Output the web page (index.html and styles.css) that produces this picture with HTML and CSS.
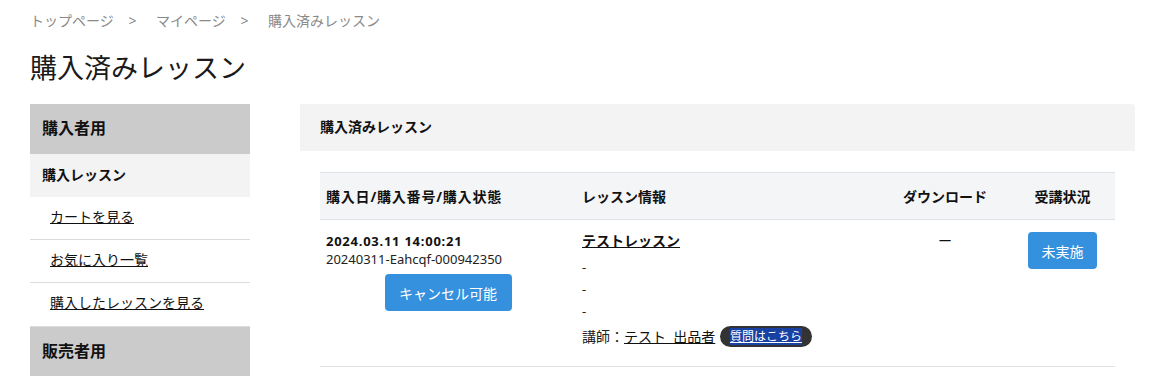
FILE: index.html
```html
<!DOCTYPE html>
<html lang="ja">
<head>
  <meta charset="UTF-8">
  <title>購入済みレッスン</title>
  <link rel="stylesheet" href="styles.css">
</head>
<body>
  <div class="page">
    <nav class="breadcrumb">
      <a href="#">トップページ</a>
      <span class="sep">&gt;</span>
      <a href="#">マイページ</a>
      <span class="sep">&gt;</span>
      <span>購入済みレッスン</span>
    </nav>

    <h1 class="page-title">購入済みレッスン</h1>

    <div class="layout">
      <aside class="sidebar">
        <div class="side-head">購入者用</div>
        <div class="side-sub">購入レッスン</div>
        <a class="side-link" href="#"><span>カートを見る</span></a>
        <a class="side-link" href="#"><span>お気に入り一覧</span></a>
        <a class="side-link" href="#"><span>購入したレッスンを見る</span></a>
        <div class="side-head">販売者用</div>
      </aside>

      <main class="main">
        <div class="panel-head">購入済みレッスン</div>
        <div class="panel-body">
          <table class="lessons">
            <colgroup>
              <col class="col-order">
              <col class="col-info">
              <col class="col-dl">
              <col class="col-status">
            </colgroup>
            <thead>
              <tr>
                <th class="th-order">購入日/購入番号/購入状態</th>
                <th>レッスン情報</th>
                <th class="center">ダウンロード</th>
                <th class="center">受講状況</th>
              </tr>
            </thead>
            <tbody>
              <tr>
                <td>
                  <div class="order-date">2024.03.11 14:00:21</div>
                  <div class="order-no">20240311-Eahcqf-000942350</div>
                  <button class="btn btn-cancel">キャンセル可能</button>
                </td>
                <td>
                  <a class="lesson-title" href="#">テストレッスン</a>
                  <div class="dash">-</div>
                  <div class="dash">-</div>
                  <div class="dash">-</div>
                  <div class="teacher">
                    講師：<a href="#">テスト&nbsp;&nbsp;出品者</a>
                    <a class="ask" href="#"><span>質問はこちら</span></a>
                  </div>
                </td>
                <td class="center dl">ー</td>
                <td class="center">
                  <button class="btn btn-status">未実施</button>
                </td>
              </tr>
            </tbody>
          </table>
        </div>
      </main>
    </div>
  </div>
</body>
</html>
```

FILE: styles.css
```css
body {
  margin: 0;
  font-family: "Noto Sans", "Noto Sans CJK JP", sans-serif;
  color: #222;
  background: #fff;
}

a {
  color: #111;
}

.page {
  padding: 0 17px 0 30px;
}

.breadcrumb {
  padding-top: 11px;
  height: 22px;
  font-size: 14px;
  line-height: 20px;
  color: #8a8a8a;
}

.breadcrumb a {
  color: #8a8a8a;
  text-decoration: none;
}

.breadcrumb .sep {
  margin: 0 16px 0 11px;
}

.page-title {
  margin: 15px 0 0;
  font-size: 27px;
  font-weight: 400;
  line-height: 40px;
  color: #1a1a1a;
  height: 56px;
}

.layout {
  display: flex;
  gap: 50px;
  align-items: flex-start;
}

.sidebar {
  width: 220px;
  flex-shrink: 0;
}

.side-head {
  height: 50px;
  line-height: 48px;
  padding: 0 12px;
  background: #cbcbcb;
  font-size: 16px;
  font-weight: 700;
  color: #111;
}

.side-sub {
  height: 43px;
  line-height: 41px;
  padding: 0 12px;
  background: #f3f3f3;
  font-size: 14px;
  font-weight: 700;
  color: #111;
}

.side-link {
  display: block;
  height: 42px;
  line-height: 40px;
  padding-left: 20px;
  border-bottom: 1px solid #dcdcdc;
  font-size: 14px;
  color: #111;
}

.side-link:last-of-type {
  height: 43px;
}

.side-link span {
  text-decoration: underline;
}

.main {
  flex: 1;
}

.panel-head {
  height: 47px;
  line-height: 46px;
  padding: 0 20px;
  background: #f3f3f4;
  border-radius: 0 4px 0 0;
  font-size: 14px;
  font-weight: 700;
  color: #111;
}

.panel-body {
  padding: 21px 20px 0;
}

.lessons {
  width: 100%;
  border-collapse: collapse;
  table-layout: fixed;
  font-size: 14px;
}

.col-order { width: 256px; }
.col-dl { width: 130px; }
.col-status { width: 105px; }

.lessons th {
  height: 46px;
  padding: 0 6px;
  background: #f4f5f7;
  border-top: 1px solid #dee2e6;
  border-bottom: 1px solid #dee2e6;
  text-align: left;
  font-weight: 700;
  color: #111;
}

.lessons .th-order {
  letter-spacing: 0.8px;
}

.lessons td {
  padding: 12px 6px 18px;
  vertical-align: top;
  border-bottom: 1px solid #dee2e6;
  line-height: 18px;
}

.lessons .center {
  text-align: center;
}

.order-date {
  font-size: 13px;
  font-weight: 700;
  letter-spacing: 0.75px;
  color: #111;
}

.order-no {
  font-size: 13px;
  color: #222;
}

.btn {
  border: none;
  border-radius: 4px;
  background: #3590dd;
  color: #fff;
  font-family: inherit;
  font-size: 14px;
  cursor: pointer;
}

.btn-cancel {
  display: block;
  margin: 6px auto 0;
  width: 127px;
  height: 37px;
}

.btn-status {
  width: 69px;
  height: 37px;
}

.lesson-title {
  display: inline-block;
  font-weight: 700;
  color: #111;
  margin-bottom: 6px;
}

.dash {
  line-height: 22px;
  font-size: 13px;
}

.teacher {
  margin-top: 4px;
  line-height: 22px;
}

.ask {
  display: inline-block;
  margin-left: 1px;
  padding: 0 10px;
  height: 21px;
  line-height: 21px;
  border-radius: 11px;
  background: #333;
  font-size: 12px;
  color: #fff;
  vertical-align: 1px;
}

.ask span {
  background: #1841a3;
  color: #fff;
}

.dl {
  color: #111;
}
```
